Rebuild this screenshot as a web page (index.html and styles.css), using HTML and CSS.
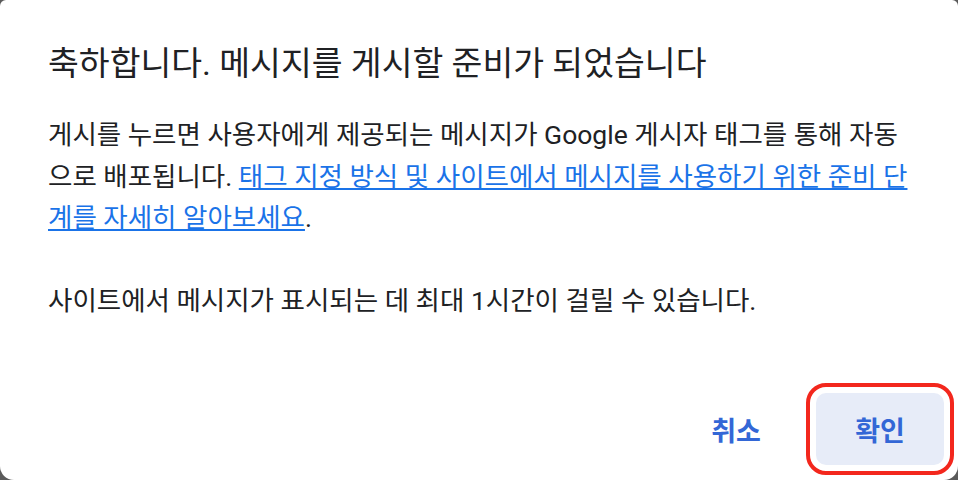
FILE: index.html
```html
<!DOCTYPE html>
<html lang="ko">
<head>
<meta charset="utf-8">
<link rel="stylesheet" href="styles.css">
</head>
<body>
<div class="dialog">
  <h1 class="title">축하합니다. 메시지를 게시할 준비가 되었습니다</h1>
  <div class="content">
    <p class="para">게시를 누르면 사용자에게 제공되는 메시지가 Google 게시자 태그를 통해 자동으로 배포됩니다. <a class="link" href="#">태그 지정 방식 및 사이트에서 메시지를 사용하기 위한 준비 단계를 자세히 알아보세요</a>.</p>
    <p class="para">사이트에서 메시지가 표시되는 데 최대 1시간이 걸릴 수 있습니다.</p>
  </div>
  <div class="actions">
    <button class="btn btn-text">취소</button>
    <button class="btn btn-tonal">확인</button>
  </div>
</div>
</body>
</html>
```
FILE: styles.css
```css
html, body {
  margin: 0;
  padding: 0;
}
body {
  background: #5b5b5b;
  width: 958px;
  height: 480px;
  overflow: hidden;
  font-family: Roboto, "Noto Sans CJK KR", sans-serif;
}
.dialog {
  box-sizing: border-box;
  width: 958px;
  height: 480px;
  background: #ffffff;
  border-radius: 6px 6px 14px 14px;
  padding: 42px 14px 15px 48px;
  display: flex;
  flex-direction: column;
}
.title {
  margin: 0;
  font-size: 33.5px;
  line-height: 44px;
  font-weight: 400;
  color: #202124;
}
.content {
  margin-top: 28px;
  width: 872px;
}
.para {
  margin: 0 0 41.5px 0;
  font-size: 26.5px;
  line-height: 41.5px;
  color: #202124;
}
.link {
  color: #1a73e8;
  text-decoration: underline;
}
.actions {
  margin-top: auto;
  display: flex;
  justify-content: flex-end;
  gap: 30px;
}
.btn {
  height: 72px;
  border: none;
  border-radius: 10px;
  font-family: Roboto, "Noto Sans CJK KR", sans-serif;
  font-size: 27px;
  font-weight: 700;
  color: #3367d6;
  background: transparent;
  padding: 0;
}
.btn-text {
  width: 100px;
}
.btn-tonal {
  width: 128px;
  background: #e7ecf8;
  outline: 4px solid #f3271d;
  outline-offset: 6px;
}
```
